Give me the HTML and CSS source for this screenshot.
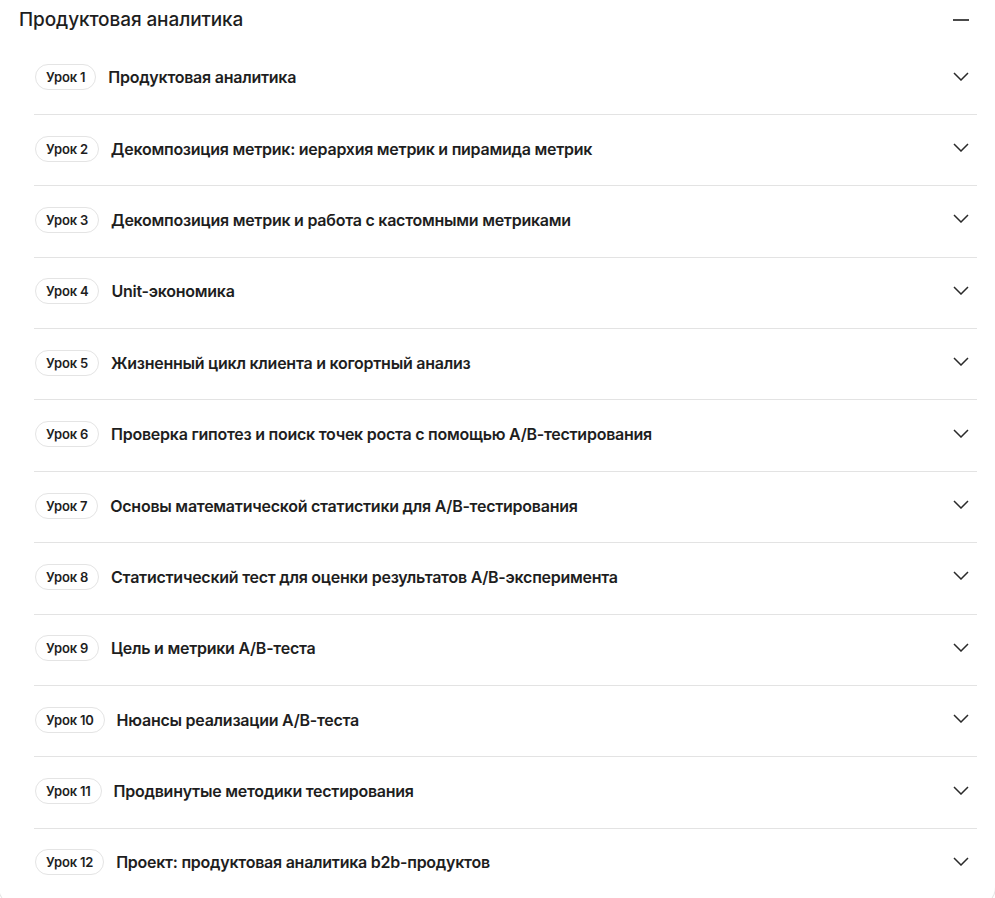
FILE: index.html
```html
<!DOCTYPE html>
<html lang="ru">
<head>
<meta charset="utf-8">
<title>Продуктовая аналитика</title>
<link rel="stylesheet" href="styles.css">
</head>
<body>
<section class="card">
  <header class="card-head">
    <h2 class="card-title">Продуктовая аналитика</h2>
    <svg class="icon-minus" width="16" height="2" viewBox="0 0 16 2"><rect width="16" height="2" fill="#4a4a4a"/></svg>
  </header>
  <ul class="lessons">
    <li class="lesson"><span class="pill">Урок 1</span><span class="lesson-title">Продуктовая аналитика</span><svg class="chev" width="16" height="9" viewBox="0 0 16 9"><path d="M1 1l7 7 7-7" fill="none" stroke="#2a2a2a" stroke-width="1.5"/></svg></li>
    <li class="lesson"><span class="pill">Урок 2</span><span class="lesson-title">Декомпозиция метрик: иерархия метрик и пирамида метрик</span><svg class="chev" width="16" height="9" viewBox="0 0 16 9"><path d="M1 1l7 7 7-7" fill="none" stroke="#2a2a2a" stroke-width="1.5"/></svg></li>
    <li class="lesson"><span class="pill">Урок 3</span><span class="lesson-title">Декомпозиция метрик и работа с кастомными метриками</span><svg class="chev" width="16" height="9" viewBox="0 0 16 9"><path d="M1 1l7 7 7-7" fill="none" stroke="#2a2a2a" stroke-width="1.5"/></svg></li>
    <li class="lesson"><span class="pill">Урок 4</span><span class="lesson-title">Unit-экономика</span><svg class="chev" width="16" height="9" viewBox="0 0 16 9"><path d="M1 1l7 7 7-7" fill="none" stroke="#2a2a2a" stroke-width="1.5"/></svg></li>
    <li class="lesson"><span class="pill">Урок 5</span><span class="lesson-title">Жизненный цикл клиента и когортный анализ</span><svg class="chev" width="16" height="9" viewBox="0 0 16 9"><path d="M1 1l7 7 7-7" fill="none" stroke="#2a2a2a" stroke-width="1.5"/></svg></li>
    <li class="lesson"><span class="pill">Урок 6</span><span class="lesson-title">Проверка гипотез и поиск точек роста с помощью A/B-тестирования</span><svg class="chev" width="16" height="9" viewBox="0 0 16 9"><path d="M1 1l7 7 7-7" fill="none" stroke="#2a2a2a" stroke-width="1.5"/></svg></li>
    <li class="lesson"><span class="pill">Урок 7</span><span class="lesson-title">Основы математической статистики для A/B-тестирования</span><svg class="chev" width="16" height="9" viewBox="0 0 16 9"><path d="M1 1l7 7 7-7" fill="none" stroke="#2a2a2a" stroke-width="1.5"/></svg></li>
    <li class="lesson"><span class="pill">Урок 8</span><span class="lesson-title">Статистический тест для оценки результатов A/B-эксперимента</span><svg class="chev" width="16" height="9" viewBox="0 0 16 9"><path d="M1 1l7 7 7-7" fill="none" stroke="#2a2a2a" stroke-width="1.5"/></svg></li>
    <li class="lesson"><span class="pill">Урок 9</span><span class="lesson-title">Цель и метрики A/B-теста</span><svg class="chev" width="16" height="9" viewBox="0 0 16 9"><path d="M1 1l7 7 7-7" fill="none" stroke="#2a2a2a" stroke-width="1.5"/></svg></li>
    <li class="lesson"><span class="pill">Урок 10</span><span class="lesson-title">Нюансы реализации A/B-теста</span><svg class="chev" width="16" height="9" viewBox="0 0 16 9"><path d="M1 1l7 7 7-7" fill="none" stroke="#2a2a2a" stroke-width="1.5"/></svg></li>
    <li class="lesson"><span class="pill">Урок 11</span><span class="lesson-title">Продвинутые методики тестирования</span><svg class="chev" width="16" height="9" viewBox="0 0 16 9"><path d="M1 1l7 7 7-7" fill="none" stroke="#2a2a2a" stroke-width="1.5"/></svg></li>
    <li class="lesson"><span class="pill">Урок 12</span><span class="lesson-title">Проект: продуктовая аналитика b2b-продуктов</span><svg class="chev" width="16" height="9" viewBox="0 0 16 9"><path d="M1 1l7 7 7-7" fill="none" stroke="#2a2a2a" stroke-width="1.5"/></svg></li>
  </ul>
</section>
</body>
</html>
```
FILE: styles.css
```css
html, body {
  margin: 0;
  padding: 0;
  background: #ffffff;
}
body {
  font-family: Inter, "Noto Sans", sans-serif;
  color: #1e1e1e;
  overflow: hidden;
}
.card {
  box-sizing: border-box;
  width: 998px;
  height: 907px;
  margin-left: -2px;
  border: 1px solid #e6e6e6;
  border-top: none;
  border-radius: 0 0 20px 20px;
  background: #fff;
}
.card-head {
  display: flex;
  align-items: center;
  justify-content: space-between;
  height: 43.5px;
  padding: 0 26px 0 20px;
  box-sizing: border-box;
}
.card-title {
  margin: 0;
  font-size: 19px;
  font-weight: 500;
  letter-spacing: -0.1px;
  color: #1e1e1e;
  line-height: 1;
  position: relative;
  top: -2px;
}
.icon-minus {
  display: block;
  position: relative;
  top: -2px;
}
.lessons {
  list-style: none;
  margin: 0 18px 0 35px;
  padding: 0;
}
.lesson {
  display: flex;
  align-items: center;
  box-sizing: border-box;
  height: 71.4px;
  padding: 0 8px 3px 1px;
  border-bottom: 1px solid #e3e3e3;
}
.lesson:last-child {
  border-bottom: none;
  height: 70px;
}
.pill {
  flex: none;
  box-sizing: border-box;
  height: 26px;
  padding: 0 10px;
  border: 1px solid #e4e4e4;
  border-radius: 13px;
  display: inline-flex;
  align-items: center;
  font-size: 13px;
  font-weight: 600;
  letter-spacing: -0.2px;
  color: #1e1e1e;
  margin-right: 12px;
}
.lesson-title {
  flex: 1;
  font-size: 16px;
  font-weight: 600;
  letter-spacing: -0.25px;
  color: #1e1e1e;
}
.chev {
  flex: none;
  display: block;
  margin-top: -2px;
}
```
